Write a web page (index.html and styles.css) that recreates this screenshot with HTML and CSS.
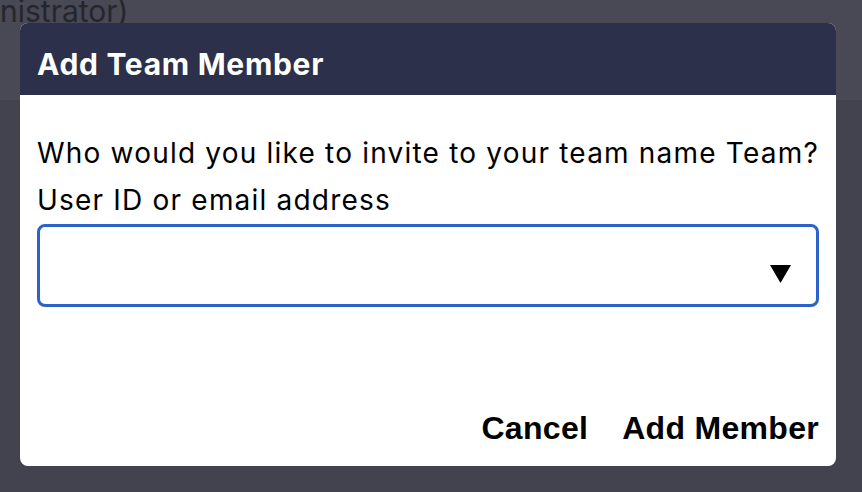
FILE: index.html
```html
<!DOCTYPE html>
<html lang="en">
<head>
  <meta charset="UTF-8">
  <meta name="viewport" content="width=device-width, initial-scale=1.0">
  <title>Add Team Member</title>
  <link rel="stylesheet" href="styles.css">
</head>
<body>
  <div class="page">
    <div class="page-header">
      <span class="page-role">nistrator)</span>
    </div>
  </div>

  <div class="modal">
    <div class="modal-header">Add Team Member</div>
    <div class="modal-body">
      <p class="question">Who would you like to invite to your team name Team?</p>
      <label class="field-label">User ID or email address</label>
      <div class="picker">
        <svg class="picker-arrow" width="21" height="18" viewBox="0 0 21 18">
          <path d="M0 0 H21 L10.5 18 Z" fill="#000"/>
        </svg>
      </div>
    </div>
    <div class="modal-footer">
      <button class="btn">Cancel</button>
      <button class="btn">Add Member</button>
    </div>
  </div>
</body>
</html>
```

FILE: styles.css
```css
* { box-sizing: border-box; }
html, body { height: 100%; }
body {
  margin: 0;
  background: #42434f;
  font-family: Inter, 'Noto Sans', sans-serif;
  overflow: hidden;
}
.page-header {
  height: 107px;
  background: #484954;
}
.page-role {
  display: block;
  font-size: 30px;
  line-height: 36px;
  margin-top: -7px;
  color: #25262d;
}

/* dialog sits on top of the dimmed page */
.modal {
  position: absolute;
  left: 20px;
  top: 23px;
  width: 816px;
  height: 443px;
  background: #fff;
  border-radius: 8px;
  overflow: hidden;
  display: flex;
  flex-direction: column;
}
.modal-header {
  height: 72px;
  padding: 23px 17px 0;
  background: #2c304a;
  color: #fff;
  font-size: 30px;
  font-weight: 700;
  line-height: 36px;
  letter-spacing: 0.7px;
}
.modal-body {
  padding: 41px 17px 0;
}
.question {
  margin: 0;
  font-size: 28px;
  line-height: 34px;
  letter-spacing: 1.2px;
  color: #000;
  white-space: nowrap;
}
.field-label {
  display: block;
  margin-top: 13px;
  font-size: 28px;
  line-height: 34px;
  letter-spacing: 1.2px;
  color: #000;
}
.picker {
  margin-top: 7px;
  height: 83px;
  border: 3px solid #2c62c9;
  border-radius: 8px;
  display: flex;
  justify-content: flex-end;
  align-items: flex-end;
  padding: 0 25px 21px 0;
}
.picker-arrow { display: block; }
.modal-footer {
  margin-top: auto;
  padding: 0 17px 20px;
  display: flex;
  justify-content: flex-end;
  gap: 34px;
}
.btn {
  border: none;
  background: none;
  padding: 0;
  font-family: 'Liberation Sans', Arial, sans-serif;
  font-size: 32px;
  font-weight: 700;
  line-height: 36px;
  letter-spacing: 0.3px;
  color: #000;
  cursor: pointer;
}
```
